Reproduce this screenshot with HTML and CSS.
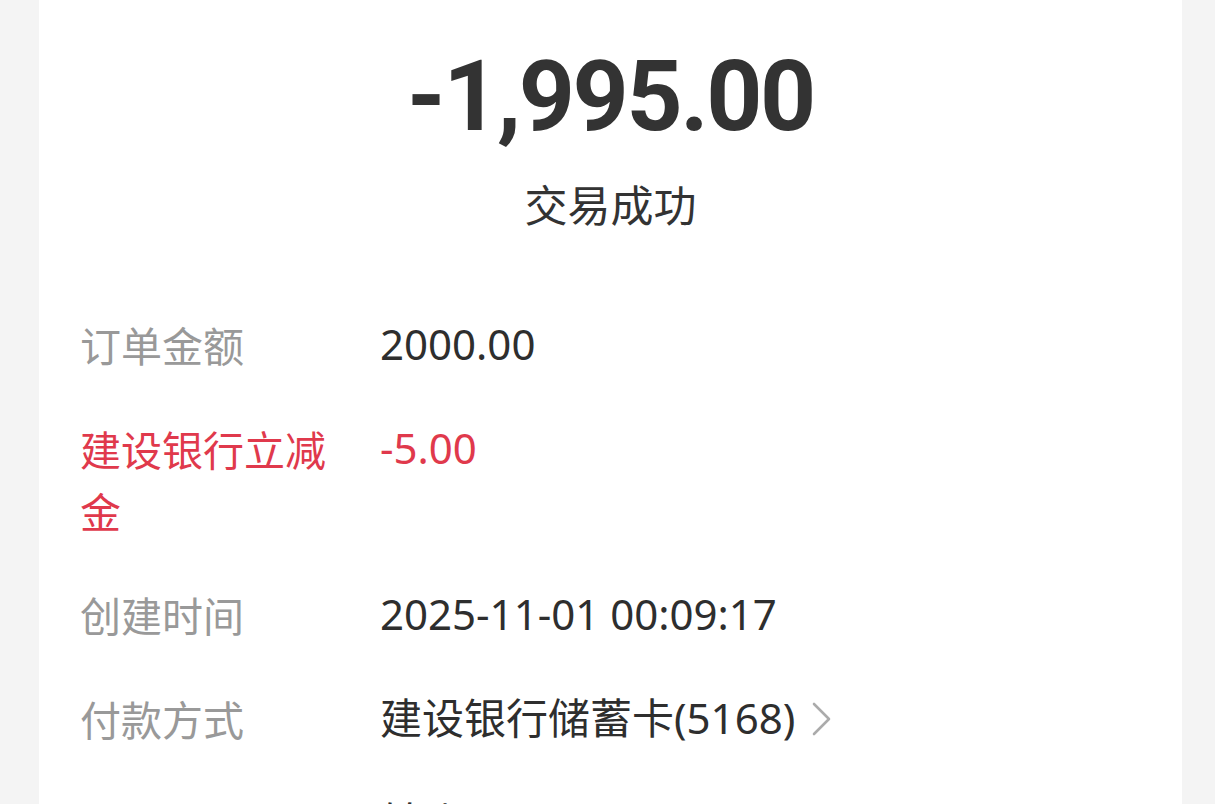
FILE: index.html
```html
<!DOCTYPE html>
<html lang="zh-CN">
<head>
<meta charset="utf-8">
<title>交易详情</title>
<link rel="stylesheet" href="styles.css">
</head>
<body>
<div class="page">
  <main class="card">
    <div class="amount">-1,995.00</div>
    <div class="status">交易成功</div>
    <dl class="rows">
      <div class="row">
        <dt class="label">订单金额</dt>
        <dd class="value">2000.00</dd>
      </div>
      <div class="row red">
        <dt class="label">建设银行立减金</dt>
        <dd class="value">-5.00</dd>
      </div>
      <div class="row">
        <dt class="label">创建时间</dt>
        <dd class="value">2025-11-01 00:09:17</dd>
      </div>
      <div class="row">
        <dt class="label">付款方式</dt>
        <dd class="value link">建设银行储蓄卡(5168)<svg class="chev" width="22" height="34" viewBox="0 0 22 34"><polyline points="3,2 18,17 3,32" fill="none" stroke="#ababab" stroke-width="2.6" stroke-linecap="round" stroke-linejoin="round"/></svg></dd>
      </div>
      <div class="row">
        <dt class="label">商品说明</dt>
        <dd class="value">转账</dd>
      </div>
    </dl>
  </main>
</div>
</body>
</html>
```

FILE: styles.css
```css
html, body {
  margin: 0;
  padding: 0;
  background: #f4f4f4;
  height: 100%;
  overflow: hidden;
}
.page {
  padding: 0 33px 0 39px;
}
.card {
  background: #ffffff;
  padding: 37px 41px 0 41px;
  min-height: 1000px;
  font-family: "Noto Sans", "Noto Sans CJK SC", sans-serif;
}
.amount {
  font-family: Roboto, "Noto Sans", sans-serif;
  font-weight: 700;
  font-size: 98px;
  line-height: 120px;
  text-align: center;
  color: #333333;
  letter-spacing: -2.4px;
}
.status {
  margin-top: 19px;
  font-family: "Noto Sans CJK SC", sans-serif;
  font-size: 43px;
  line-height: 54px;
  text-align: center;
  color: #333333;
}
.rows {
  margin: 83px 0 0 0;
  display: flex;
  flex-direction: column;
  gap: 42px;
}
.row {
  display: flex;
  align-items: flex-start;
  line-height: 62px;
}
.label {
  width: 260px;
  margin: 0 40px 0 0;
  font-family: "Noto Sans CJK SC", sans-serif;
  font-size: 41px;
  color: #999999;
}
.value {
  margin: 0;
  font-size: 42px;
  color: #2e2e2e;
  display: flex;
  align-items: center;
}
.row.red .label,
.row.red .value {
  color: #e0394c;
}
.chev {
  margin-left: 16px;
  margin-top: 2px;
}
```
